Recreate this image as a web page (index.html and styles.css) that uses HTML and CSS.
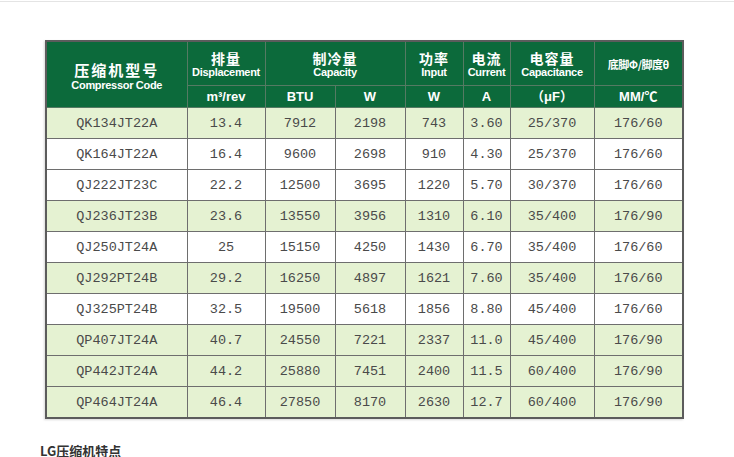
FILE: index.html
```html
<!DOCTYPE html>
<html lang="en">
<head>
    <meta charset="UTF-8">
    <meta name="viewport" content="width=device-width, initial-scale=1.0">
    <title>LG压缩机参数</title>
    <link rel="stylesheet" href="styles.css">
</head>
<body>
    <div class="topline"></div>
    <div class="content">
        <table class="spec-table">
            <colgroup>
                <col style="width:141px">
                <col style="width:78px">
                <col style="width:70px">
                <col style="width:70px">
                <col style="width:58px">
                <col style="width:47px">
                <col style="width:84px">
                <col style="width:89px">
            </colgroup>
            <thead>
                <tr class="head-main">
                    <th rowspan="2"><span class="cn cn-big">压缩机型号</span><span class="en">Compressor Code</span></th>
                    <th><span class="cn">排量</span><span class="en">Displacement</span></th>
                    <th colspan="2"><span class="cn">制冷量</span><span class="en">Capacity</span></th>
                    <th><span class="cn">功率</span><span class="en">Input</span></th>
                    <th><span class="cn">电流</span><span class="en">Current</span></th>
                    <th><span class="cn">电容量</span><span class="en">Capacitance</span></th>
                    <th><span class="cn-small">底脚Φ/脚度θ</span></th>
                </tr>
                <tr class="head-unit">
                    <th>m³/rev</th>
                    <th>BTU</th>
                    <th>W</th>
                    <th>W</th>
                    <th>A</th>
                    <th>（μF）</th>
                    <th>MM/℃</th>
                </tr>
            </thead>
            <tbody>
                <tr class="green"><td>QK134JT22A</td><td>13.4</td><td>7912</td><td>2198</td><td>743</td><td>3.60</td><td>25/370</td><td>176/60</td></tr>
                <tr><td>QK164JT22A</td><td>16.4</td><td>9600</td><td>2698</td><td>910</td><td>4.30</td><td>25/370</td><td>176/60</td></tr>
                <tr><td>QJ222JT23C</td><td>22.2</td><td>12500</td><td>3695</td><td>1220</td><td>5.70</td><td>30/370</td><td>176/60</td></tr>
                <tr class="green"><td>QJ236JT23B</td><td>23.6</td><td>13550</td><td>3956</td><td>1310</td><td>6.10</td><td>35/400</td><td>176/90</td></tr>
                <tr><td>QJ250JT24A</td><td>25</td><td>15150</td><td>4250</td><td>1430</td><td>6.70</td><td>35/400</td><td>176/60</td></tr>
                <tr class="green"><td>QJ292PT24B</td><td>29.2</td><td>16250</td><td>4897</td><td>1621</td><td>7.60</td><td>35/400</td><td>176/60</td></tr>
                <tr><td>QJ325PT24B</td><td>32.5</td><td>19500</td><td>5618</td><td>1856</td><td>8.80</td><td>45/400</td><td>176/60</td></tr>
                <tr class="green"><td>QP407JT24A</td><td>40.7</td><td>24550</td><td>7221</td><td>2337</td><td>11.0</td><td>45/400</td><td>176/90</td></tr>
                <tr class="green"><td>QP442JT24A</td><td>44.2</td><td>25880</td><td>7451</td><td>2400</td><td>11.5</td><td>60/400</td><td>176/90</td></tr>
                <tr class="green"><td>QP464JT24A</td><td>46.4</td><td>27850</td><td>8170</td><td>2630</td><td>12.7</td><td>60/400</td><td>176/90</td></tr>
            </tbody>
        </table>
        <h3 class="section-title">LG压缩机特点</h3>
    </div>
</body>
</html>
```

FILE: styles.css
```css
body {
    margin: 0;
    padding: 0;
    background: #fff;
    font-family: "Liberation Sans", "Noto Sans CJK SC", sans-serif;
    color: #333;
}
.topline {
    height: 1px;
    margin-top: 1px;
    background: #e4e4e4;
}
.content {
    padding: 38px 0 0 45px;
}
.spec-table {
    border-collapse: collapse;
    table-layout: fixed;
    width: 637px;
    border: 2px solid #5c5c5c;
    box-shadow: -1px 1px 2px rgba(0, 0, 0, 0.15);
}
.spec-table th {
    background: #0c6a3b;
    color: #fff;
    border: 1px solid #557a63;
    padding: 0;
    text-align: center;
    font-weight: bold;
    line-height: 1;
}
.head-main th {
    height: 43px;
}
.head-unit th {
    height: 21px;
    font-family: "Liberation Sans", "Noto Sans CJK SC", sans-serif;
    font-size: 13px;
}
.cn {
    display: block;
    font-family: "Noto Sans CJK SC", sans-serif;
    font-size: 14px;
    letter-spacing: 1px;
    line-height: 16px;
}
.cn-big {
    font-size: 15px;
    letter-spacing: 2px;
    line-height: 18px;
    margin-top: 3px;
}
.cn-small {
    font-family: "Noto Sans CJK SC", sans-serif;
    font-size: 11px;
    letter-spacing: -0.5px;
}
.en {
    display: block;
    font-size: 11px;
    letter-spacing: -0.3px;
    line-height: 12px;
}
.spec-table td {
    height: 30px;
    padding: 0;
    border: 1px solid #6e6e6e;
    text-align: center;
    font-family: "Liberation Mono", "Noto Sans CJK SC", monospace;
    font-size: 13.5px;
    color: #4a4a4a;
    background: #fff;
}
.spec-table tr.green td {
    background: #e5f2d2;
}
.section-title {
    margin: 22px 0 0 -5px;
    font-size: 13px;
    font-weight: bold;
    color: #333;
    font-family: "Noto Sans CJK SC", sans-serif;
}
```
